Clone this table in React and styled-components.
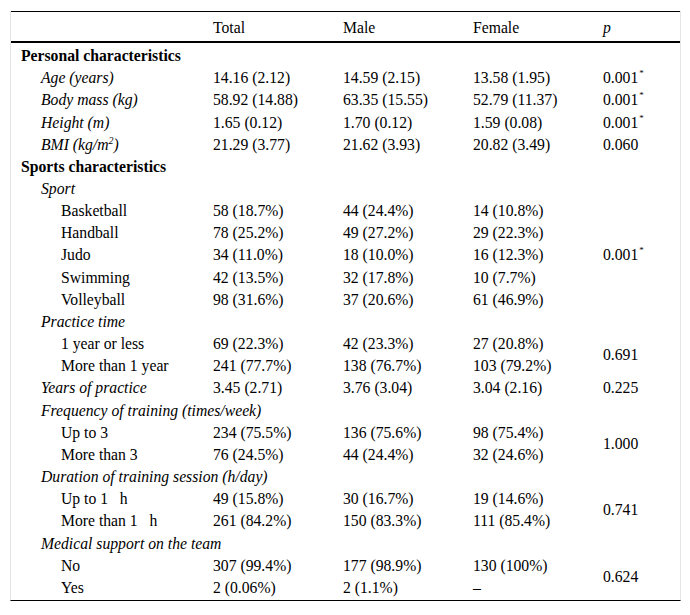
import React from "react";
import styled, { createGlobalStyle } from "styled-components";

const Global = createGlobalStyle`
  html, body { margin: 0; padding: 0; background: #fff; }
  body { font-family: "Liberation Serif", "Times New Roman", serif; color: #000; }
`;

const Frame = styled.div`
  margin: 11px 0 0 10px;
  width: 669px;
  border-left: 1px solid #e4e4e4;
  border-right: 1px solid #e4e4e4;
  padding-bottom: 3px;
  border-bottom: 1px solid #000;
`;

const Table = styled.table`
  width: 669px;
  border-collapse: collapse;
  table-layout: fixed;
  font-family: "Liberation Serif", "Times New Roman", serif;
  font-size: 15.7px;
  line-height: 18px;
  color: #000;
`;

const HeadRow = styled.tr`
  border-top: 1px solid #000;
  border-bottom: 2px solid #000;
`;

const Th = styled.th`
  font-weight: normal;
  font-style: ${(p) => (p.$italic ? "italic" : "normal")};
  text-align: left;
  height: 27px;
  padding: 2px 0 0 10px;
  vertical-align: middle;
`;

const Td = styled.td`
  height: 18.17px;
  padding: 4px 0 0 ${(p) => p.$indent ?? 10}px;
  vertical-align: middle;
  white-space: nowrap;
  font-weight: ${(p) => (p.$bold ? "bold" : "normal")};
  font-style: ${(p) => (p.$italic ? "italic" : "normal")};
`;

const Star = styled.sup`
  font-size: 9px;
  line-height: 0;
  vertical-align: 7px;
  margin-left: 1px;
`;

const Sup = styled.sup`
  font-size: 10px;
  line-height: 0;
  vertical-align: 6px;
`;

const Sig = ({ v }) => (
  <>
    {v}
    <Star>*</Star>
  </>
);

const Section = ({ label }) => (
  <tr>
    <Td $bold colSpan={5}>{label}</Td>
  </tr>
);

const Group = ({ label }) => (
  <tr>
    <Td $italic $indent={30} colSpan={5}>{label}</Td>
  </tr>
);

const Var = ({ label, cells, p, pSpan }) => (
  <tr>
    <Td $italic $indent={30}>{label}</Td>
    {cells.map((c, i) => (
      <Td key={i}>{c}</Td>
    ))}
    {p !== undefined && <Td rowSpan={pSpan || 1}>{p}</Td>}
  </tr>
);

const Item = ({ label, cells, p, pSpan }) => (
  <tr>
    <Td $indent={50}>{label}</Td>
    {cells.map((c, i) => (
      <Td key={i}>{c}</Td>
    ))}
    {p !== undefined && <Td rowSpan={pSpan || 1}>{p}</Td>}
  </tr>
);

export default function App() {
  return (
    <>
      <Global />
      <Frame>
        <Table>
          <colgroup>
            <col style={{ width: 192 }} />
            <col style={{ width: 130 }} />
            <col style={{ width: 130 }} />
            <col style={{ width: 130 }} />
            <col style={{ width: 87 }} />
          </colgroup>
          <thead>
            <HeadRow>
              <Th></Th>
              <Th>Total</Th>
              <Th>Male</Th>
              <Th>Female</Th>
              <Th $italic>p</Th>
            </HeadRow>
          </thead>
          <tbody>
            <Section label="Personal characteristics" />
            <Var label="Age (years)" cells={["14.16 (2.12)", "14.59 (2.15)", "13.58 (1.95)"]} p={<Sig v="0.001" />} />
            <Var label="Body mass (kg)" cells={["58.92 (14.88)", "63.35 (15.55)", "52.79 (11.37)"]} p={<Sig v="0.001" />} />
            <Var label="Height (m)" cells={["1.65 (0.12)", "1.70 (0.12)", "1.59 (0.08)"]} p={<Sig v="0.001" />} />
            <Var
              label={<>BMI (kg/m<Sup>2</Sup>)</>}
              cells={["21.29 (3.77)", "21.62 (3.93)", "20.82 (3.49)"]}
              p="0.060"
            />
            <Section label="Sports characteristics" />
            <Group label="Sport" />
            <Item label="Basketball" cells={["58 (18.7%)", "44 (24.4%)", "14 (10.8%)"]} p={<Sig v="0.001" />} pSpan={5} />
            <Item label="Handball" cells={["78 (25.2%)", "49 (27.2%)", "29 (22.3%)"]} />
            <Item label="Judo" cells={["34 (11.0%)", "18 (10.0%)", "16 (12.3%)"]} />
            <Item label="Swimming" cells={["42 (13.5%)", "32 (17.8%)", "10 (7.7%)"]} />
            <Item label="Volleyball" cells={["98 (31.6%)", "37 (20.6%)", "61 (46.9%)"]} />
            <Group label="Practice time" />
            <Item label="1 year or less" cells={["69 (22.3%)", "42 (23.3%)", "27 (20.8%)"]} p="0.691" pSpan={2} />
            <Item label="More than 1 year" cells={["241 (77.7%)", "138 (76.7%)", "103 (79.2%)"]} />
            <Var label="Years of practice" cells={["3.45 (2.71)", "3.76 (3.04)", "3.04 (2.16)"]} p="0.225" />
            <Group label="Frequency of training (times/week)" />
            <Item label="Up to 3" cells={["234 (75.5%)", "136 (75.6%)", "98 (75.4%)"]} p="1.000" pSpan={2} />
            <Item label="More than 3" cells={["76 (24.5%)", "44 (24.4%)", "32 (24.6%)"]} />
            <Group label="Duration of training session (h/day)" />
            <Item label={"Up to 1\u00a0\u00a0\u00a0h"} cells={["49 (15.8%)", "30 (16.7%)", "19 (14.6%)"]} p="0.741" pSpan={2} />
            <Item label={"More than 1\u00a0\u00a0\u00a0h"} cells={["261 (84.2%)", "150 (83.3%)", "111 (85.4%)"]} />
            <Group label="Medical support on the team" />
            <Item label="No" cells={["307 (99.4%)", "177 (98.9%)", "130 (100%)"]} p="0.624" pSpan={2} />
            <Item label="Yes" cells={["2 (0.06%)", "2 (1.1%)", "\u2013"]} />
          </tbody>
        </Table>
      </Frame>
    </>
  );
}
